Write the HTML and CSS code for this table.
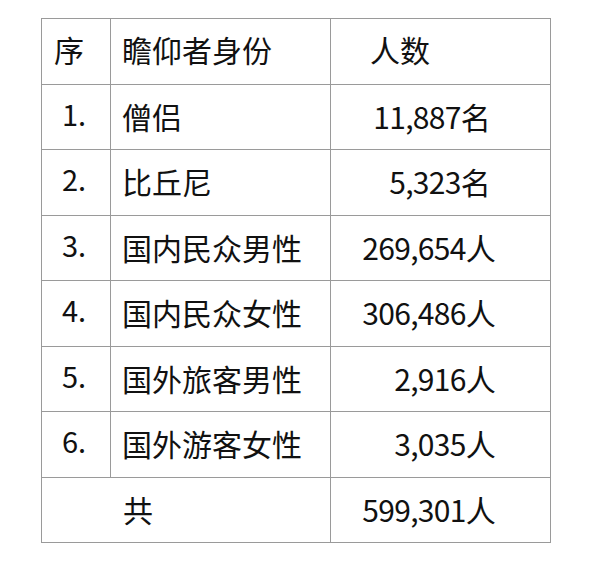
FILE: index.html
```html
<!DOCTYPE html>
<html lang="zh">
<head>
<meta charset="utf-8">
<title>瞻仰者身份</title>
<link rel="stylesheet" href="styles.css">
</head>
<body>
<table class="stats">
  <colgroup>
    <col class="c-seq">
    <col class="c-name">
    <col class="c-num">
  </colgroup>
  <tr class="head">
    <td class="seq">序</td>
    <td class="name">瞻仰者身份</td>
    <td class="num num-head">人数</td>
  </tr>
  <tr>
    <td class="seq">1.</td>
    <td class="name">僧侣</td>
    <td class="num num-ming">11,887名</td>
  </tr>
  <tr>
    <td class="seq">2.</td>
    <td class="name">比丘尼</td>
    <td class="num num-ming">5,323名</td>
  </tr>
  <tr>
    <td class="seq">3.</td>
    <td class="name">国内民众男性</td>
    <td class="num">269,654人</td>
  </tr>
  <tr>
    <td class="seq">4.</td>
    <td class="name">国内民众女性</td>
    <td class="num">306,486人</td>
  </tr>
  <tr>
    <td class="seq">5.</td>
    <td class="name">国外旅客男性</td>
    <td class="num">2,916人</td>
  </tr>
  <tr>
    <td class="seq">6.</td>
    <td class="name">国外游客女性</td>
    <td class="num">3,035人</td>
  </tr>
  <tr class="total">
    <td class="name total-label" colspan="2">共</td>
    <td class="num">599,301人</td>
  </tr>
</table>
</body>
</html>
```

FILE: styles.css
```css
html, body {
  margin: 0;
  padding: 0;
  background: #ffffff;
}

body {
  font-family: "Noto Sans CJK SC", "Noto Sans", sans-serif;
  color: #111111;
}

.stats {
  border-collapse: collapse;
  table-layout: fixed;
  margin: 18px 0 0 41px;
  width: 509px;
  font-size: 30px;
}

.c-seq { width: 69px; }
.c-name { width: 220px; }
.c-num { width: 220px; }

.stats tr {
  height: 65.5px;
}

.stats td {
  border: 1px solid #9a9a9a;
  padding: 0;
  vertical-align: top;
  line-height: 30px;
  white-space: nowrap;
}

.stats td.seq {
  padding-left: 20px;
  padding-top: 13px;
  font-size: 29px;
}

.stats .head td.seq {
  padding-left: 12px;
  padding-top: 15px;
  font-size: 30px;
}

.stats td.name {
  padding-left: 11px;
  padding-top: 16px;
}

.stats .head td.name {
  padding-top: 15px;
}

.stats td.total-label {
  padding-left: 81px;
}

.stats td.num {
  text-align: right;
  padding-right: 55px;
  padding-top: 16px;
  letter-spacing: -0.7px;
}

.stats td.num-ming {
  padding-right: 60px;
}

.stats td.num-head {
  padding-right: 120px;
  padding-top: 15px;
  letter-spacing: 0;
}
```
